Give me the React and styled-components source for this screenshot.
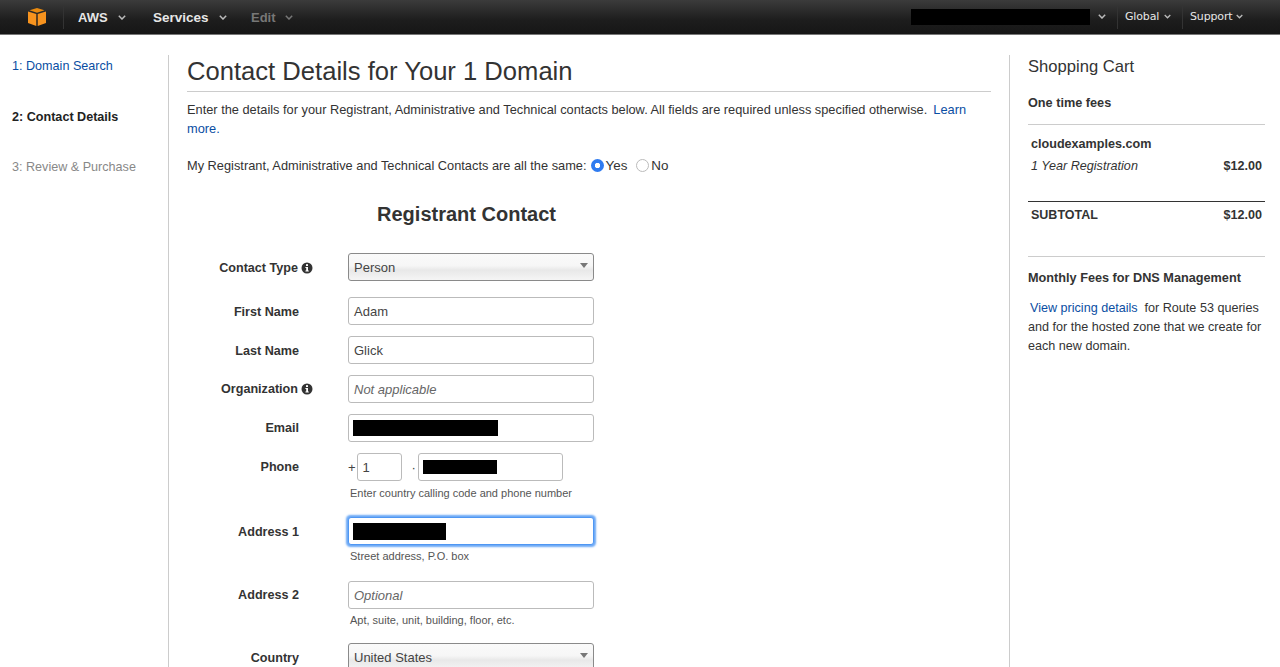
import React from "react";
import styled, { createGlobalStyle } from "styled-components";

const Global = createGlobalStyle`
  html, body { margin: 0; padding: 0; height: 667px; overflow: hidden; background: #fff; }
  body { font-family: "Liberation Sans", Arial, sans-serif; font-size: 12.8px; color: #333; }
`;

const NavBar = styled.header`
  height: 34px; display: flex; align-items: center;
  background: linear-gradient(#3b3b3b, #1d1d1d 60%, #161616);
  border-bottom: 1px solid #777;
  color: #eee;
`;
const NavLogo = styled.div`
  width: 64px; height: 24px; padding-left: 28px; box-sizing: border-box; display: flex; align-items: center;
  border-right: 1px solid #333;
`;
const NavItem = styled.div`
  display: flex; align-items: center; height: 24px;
  width: ${p => p.$w}px; padding-left: ${p => p.$pl ?? 14}px; box-sizing: border-box;
  font-size: ${p => p.$small ? 11 : p.$size ?? 13}px;
  font-weight: ${p => p.$small ? 400 : 700};
  font-family: ${p => p.$small ? '"DejaVu Sans", sans-serif' : '"Liberation Sans", sans-serif'};
  letter-spacing: ${p => p.$small ? "-0.15px" : "0"};
  color: ${p => p.$dim ? "#777" : "#e6e6e6"};
  border-right: ${p => p.$sep ? "1px solid #333" : "none"};
  padding-bottom: ${p => p.$small ? 2 : 0}px;
`;
const NavSpacer = styled.div`flex: 1;`;
const Redact = styled.div`
  background: #000; width: ${p => p.$w}px; height: ${p => p.$h}px; flex: none; margin-left: ${p => p.$ml ?? 0}px;
`;
const Chev = styled.svg`margin-left: ${p => p.$ml}px; flex: none;`;
const Chevron = ({ ml = 9, w = 8, dim }) => (
  <Chev $ml={ml} width={w} height="5" viewBox="0 0 8 5">
    <path d="M.8.8 4 4 7.2.8" fill="none" stroke={dim ? "#777" : "#bbb"} strokeWidth="1.5" />
  </Chev>
);

const Body = styled.div`
  display: grid; grid-template-columns: 168px 842px 1fr; padding-top: 20px; height: 612px; overflow: hidden;
`;
const Steps = styled.nav`
  padding: 1px 0 0 12px; display: flex; flex-direction: column;
`;
const Step = styled.div`
  height: 20px; line-height: 20px; margin-bottom: ${p => p.$mb ?? 30}px; font-size: 12.6px;
  color: ${p => p.$state === "link" ? "#0a4ea3" : p.$state === "off" ? "#888" : "#222"};
  font-weight: ${p => p.$state === "on" ? 700 : 400};
`;
const Main = styled.main`
  border-left: 1px solid #ccc; border-right: 1px solid #ccc; padding: 0 18px; overflow: hidden; height: 620px;
`;
const Title = styled.h1`
  margin: 0; font-size: 25.6px; font-weight: 400; color: #333; line-height: 32px; height: 36px;
  border-bottom: 1px solid #ccc;
`;
const Intro = styled.p`
  margin: 8px 0 0; line-height: 19px; font-size: 12.8px; color: #333;
`;
const A = styled.a`color: #0a4ea3; text-decoration: none; margin-left: ${p => p.$ml ?? 0}px;`;
const SameRow = styled.div`
  display: flex; align-items: center; margin-top: 17px; height: 20px; font-size: 12.8px; color: #333;
`;
const RadioLabel = styled.span`margin-left: ${p => p.$ml}px; font-size: 13.4px;`;
const Radio = styled.span`
  width: 13px; height: 13px; border-radius: 50%; box-sizing: border-box; margin-left: ${p => p.$ml}px; flex: none;
  ${p => p.$on
    ? "background: radial-gradient(circle, #fff 0 2.4px, #2f7bf0 3px);"
    : "background: #fff; border: 1px solid #bbb;"}
`;
const FormTitle = styled.h2`
  margin: 27px 0 0; width: 559px; text-align: center; font-size: 20px; font-weight: 700; color: #333; line-height: 24px;
`;
const Form = styled.div`margin-top: 27px; display: flex; flex-direction: column;`;
const Row = styled.div`
  display: grid; grid-template-columns: 112px 246px; column-gap: 49px; margin-bottom: ${p => p.$mb ?? 11}px;
`;
const Label = styled.div`
  display: flex; justify-content: flex-end; align-items: center; gap: 3px; height: 27px; padding-top: ${p => p.$pt ?? 1}px; font-weight: 700; font-size: 12.6px; color: #333;
  margin-right: ${p => p.$info ? -14 : 0}px;
`;
const Box = styled.div`
  height: 28px; box-sizing: border-box; border: 1px solid ${p => p.$focus ? "#4f97f3" : "#bbb"}; border-radius: 3px;
  padding: 0 5px; display: flex; align-items: center; font-size: 13px; background: #fff;
  color: ${p => p.$ph ? "#666" : "#444"}; font-style: ${p => p.$ph ? "italic" : "normal"};
  width: ${p => p.$w ? `${p.$w}px` : "auto"}; flex: none;
  ${p => p.$focus && "box-shadow: 0 0 2px 1.5px #6aa8f6;"}
`;
const SelectBox = styled(Box)`
  position: relative; border-color: #8a8a8a;
  background: linear-gradient(#fafafa, #f6f6f6 45%, #e8e8e8 62%, #f5f5f5);
`;
const Caret = styled.i`
  position: absolute; right: 5px; top: 9px; width: 0; height: 0;
  border-left: 4px solid transparent; border-right: 4px solid transparent; border-top: 5px solid #777;
`;
const Hint = styled.div`font-size: 11px; color: #555; margin: ${p => p.$mt ?? 4}px 0 0 2px; line-height: 14px;`;
const PhoneRow = styled.div`display: flex; align-items: center; color: #444; font-size: 13px;`;
const PhoneSep = styled.span`margin: 0 ${p => p.$r}px 0 ${p => p.$l}px;`;

const Cart = styled.aside`padding: 0 15px 0 18px; font-size: 12.6px; color: #333;`;
const CartTitle = styled.h3`margin: 0; font-size: 16.6px; font-weight: 400; line-height: 24px; color: #333;`;
const CartSub = styled.h4`margin: ${p => p.$mt}px 0 0; font-size: 12.7px; font-weight: 700; line-height: 16px; color: #333;`;
const Rule = styled.div`
  height: 1px; background: ${p => p.$dark ? "#333" : "#ccc"}; margin: ${p => p.$m};
`;
const CartLine = styled.div`
  display: flex; justify-content: space-between; align-items: center; padding: 0 3px; height: 20px;
  margin-top: ${p => p.$mt}px;
  font-style: ${p => p.$it ? "italic" : "normal"};
`;
const Domain = styled.div`font-weight: 700; padding: 0 3px; height: 20px; line-height: 20px;`;
const Price = styled.b`font-style: normal; font-weight: 700;`;
const Total = styled.b`font-size: 12.5px;`;
const CartText = styled.p`margin: 13px 0 0; line-height: 19px; text-indent: 2px;`;
const CartLineText = styled.span`display: block; text-indent: 0;`;

const Cube = () => (
  <svg width="18" height="18" viewBox="0 0 18 18">
    <path d="M9 0 16.5 2.3 9 4.8 1.5 2.3Z" fill="#e8890f" />
    <path d="M0 3.4 8.3 6.1V18L0 15Z" fill="#f7931e" />
    <path d="M18 3.4 9.7 6.1V18L18 15Z" fill="#f7931e" />
  </svg>
);
const Info = () => (
  <svg width="12" height="12" viewBox="0 0 12 12">
    <circle cx="6" cy="6" r="5.5" fill="#333" />
    <rect x="5" y="2.2" width="2" height="1.8" fill="#fff" />
    <path d="M4.4 5h2.6v3.6h.8v1H4.4v-1h.8V6h-.8Z" fill="#fff" />
  </svg>
);

const Field = ({ label, info, children, hint, hintTop, mb, labelTop }) => (
  <Row $mb={mb}>
    <Label $info={info} $pt={labelTop}>{label}{info && <Info />}</Label>
    <div>{children}{hint && <Hint $mt={hintTop}>{hint}</Hint>}</div>
  </Row>
);

export default function App() {
  return (
    <>
      <Global />
      <NavBar>
        <NavLogo><Cube /></NavLogo>
        <NavItem $w={76}>AWS<Chevron ml={10} /></NavItem>
        <NavItem $w={100} $pl={13} $size={13.5}>Services<Chevron ml={10} /></NavItem>
        <NavItem $pl={11} $w={70} $dim>Edit<Chevron ml={9} dim /></NavItem>
        <NavSpacer />
        <Redact $w={179} $h={16} />
        <NavItem $w={28} $pl={8} $small $sep><Chevron ml={0} /></NavItem>
        <NavItem $w={65} $pl={7} $small $sep>Global<Chevron ml={5} w={7} /></NavItem>
        <NavItem $w={97} $pl={7} $small>Support<Chevron ml={4} w={7} /></NavItem>
      </NavBar>
      <Body>
        <Steps>
          <Step $state="link" $mb={31}>1: Domain Search</Step>
          <Step $state="on">2: Contact Details</Step>
          <Step $state="off">3: Review &amp; Purchase</Step>
        </Steps>
        <Main>
          <Title>Contact Details for Your 1 Domain</Title>
          <Intro>
            Enter the details for your Registrant, Administrative and Technical contacts below. All fields are required unless specified otherwise.&nbsp; <A $ml={-1}>Learn</A> <A>more.</A>
          </Intro>
          <SameRow>
            My Registrant, Administrative and Technical Contacts are all the same:
            <Radio $on $ml={4} /><RadioLabel $ml={2}>Yes</RadioLabel>
            <Radio $ml={9} /><RadioLabel $ml={2}>No</RadioLabel>
          </SameRow>
          <FormTitle>Registrant Contact</FormTitle>
          <Form>
            <Field label="Contact Type" info mb={16}><SelectBox>Person<Caret /></SelectBox></Field>
            <Field label="First Name"><Box>Adam</Box></Field>
            <Field label="Last Name"><Box>Glick</Box></Field>
            <Field label="Organization" info labelTop={0}><Box $ph>Not applicable</Box></Field>
            <Field label="Email" labelTop={0}><Box><Redact $ml={-1} $w={145} $h={16} /></Box></Field>
            <Field label="Phone" labelTop={0} hint="Enter country calling code and phone number" hintTop={5} mb={17}>
              <PhoneRow>
                +<PhoneSep $l={1} $r={0} />
                <Box $w={45}>1</Box>
                <PhoneSep $l={10} $r={2}>·</PhoneSep>
                <Box $w={145}><Redact $ml={-1} $w={74} $h={14} /></Box>
              </PhoneRow>
            </Field>
            <Field label="Address 1" hint="Street address, P.O. box" mb={18}>
              <Box $focus><Redact $ml={-1} $w={93} $h={17} /></Box>
            </Field>
            <Field label="Address 2" labelTop={0} hint="Apt, suite, unit, building, floor, etc." mb={16}>
              <Box $ph>Optional</Box>
            </Field>
            <Field label="Country"><SelectBox>United States<Caret /></SelectBox></Field>
          </Form>
        </Main>
        <Cart>
          <CartTitle>Shopping Cart</CartTitle>
          <CartSub $mt={16}>One time fees</CartSub>
          <Rule $m="13px 0 9px" />
          <Domain>cloudexamples.com</Domain>
          <CartLine $it $mt={2}>1 Year Registration<Price>$12.00</Price></CartLine>
          <Rule $dark $m="25px 0 0" />
          <CartLine $mt={3}><Total>SUBTOTAL</Total><Price>$12.00</Price></CartLine>
          <Rule $m="31px 0 0" />
          <CartSub $mt={13}>Monthly Fees for DNS Management</CartSub>
          <CartText>
            <A>View pricing details</A>&nbsp; for Route 53 queries
            <CartLineText>and for the hosted zone that we create for</CartLineText>
            <CartLineText>each new domain.</CartLineText>
          </CartText>
        </Cart>
      </Body>
    </>
  );
}
